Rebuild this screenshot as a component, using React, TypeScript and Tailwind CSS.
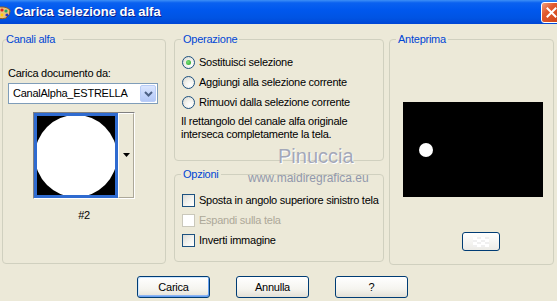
import React from 'react';

const Radio = ({ checked, label }: { checked?: boolean; label: string }) => (
  <div className="h-[20px] flex items-center pl-[7px]">
    <span className="w-[13px] h-[13px] rounded-full border border-[#1c5180] bg-[radial-gradient(circle_at_65%_70%,#ffffff_0%,#f4f3ee_40%,#d6d4cb_100%)] flex items-center justify-center">
      {checked && <span className="w-[5px] h-[5px] rounded-full bg-[radial-gradient(circle_at_40%_40%,#7be07b,#21a121)]" />}
    </span>
    <span className="ml-[4px] whitespace-nowrap">{label}</span>
  </div>
);

const Check = ({ disabled, label }: { disabled?: boolean; label: string }) => (
  <div className="h-[20px] flex items-center pl-[7px]">
    <span
      className={`w-[13px] h-[13px] border ${
        disabled
          ? 'border-[#cac8bb] bg-white'
          : 'border-[#1c5180] bg-[linear-gradient(135deg,#dcdcd7_0%,#f3f3ef_55%,#ffffff_100%)]'
      }`}
    />
    <span className={`ml-[4px] whitespace-nowrap ${disabled ? 'text-[#aca899]' : ''}`}>{label}</span>
  </div>
);

const Button = ({ label, def }: { label: string; def?: boolean }) => (
  <button
    className={`w-[73px] h-[22px] rounded-[3px] border border-[#003c74] bg-[linear-gradient(to_bottom,#ffffff_0%,#f5f4ef_60%,#e3e0d6_100%)] text-black ${
      def ? 'shadow-[inset_1px_1px_0_#cee7ff,inset_-1px_-1px_0_#69a1f0,inset_0_-2px_0_#8cb4f2]' : ''
    }`}
  >
    {label}
  </button>
);

const App: React.FC = () => {
  return (
    <div className="w-[557px] h-[301px] bg-[#ece9d8] overflow-hidden relative text-[11px] leading-[13px] tracking-[-0.25px] text-black font-['Liberation_Sans',Arial,sans-serif]">
      {/* Title bar */}
      <div className="h-[24px] flex items-center justify-between bg-[linear-gradient(to_bottom,#3d8ff6_0%,#0a61f0_12%,#0058ee_40%,#0054e3_75%,#0046d5_100%)]">
        <div className="flex items-center">
          <svg width="11" height="15" viewBox="0 0 11 15" className="mt-[1px]">
            <path d="M-4 3 Q5 0 10 5 Q11 10 6 13 Q-1 15 -4 11 Z" fill="#e9c27a" stroke="#8a5a20" strokeWidth="1" />
            <circle cx="2" cy="5" r="1.6" fill="#d22" />
            <circle cx="6" cy="6" r="1.6" fill="#2a6" />
            <circle cx="7" cy="10" r="1.6" fill="#23c" />
            <circle cx="2" cy="10" r="1.4" fill="#fc0" />
          </svg>
          <span className="ml-[3px] text-white font-bold text-[13px] leading-[16px] tracking-normal [text-shadow:1px_1px_0_#0a1e8c]">
            Carica selezione da alfa
          </span>
        </div>
        <div className="w-[21px] h-[21px] mr-[-5px] rounded-[3px] border border-white bg-[linear-gradient(135deg,#f0a080_0%,#e25a2f_35%,#cc4216_100%)] flex items-center justify-center">
          <svg width="11" height="11" viewBox="0 0 11 11">
            <path d="M1.5 1.5 L9.5 9.5 M9.5 1.5 L1.5 9.5" stroke="white" strokeWidth="2" strokeLinecap="square" />
          </svg>
        </div>
      </div>

      {/* Body */}
      <div className="flex pl-[2px] pt-[9px]">
        {/* Canali alfa */}
        <fieldset className="w-[164px] h-[231px] border border-[#d0d0bf] rounded-[4px] pl-[5px]">
          <legend className="px-[3px] -translate-x-[5px] text-[#0046d5]">Canali alfa</legend>
          <div className="mt-[21px]">Carica documento da:</div>
          <div className="mt-[3px] w-[150px] h-[21px] border border-[#7f9db9] bg-white flex items-center justify-between">
            <span className="pl-[4px]">CanalAlpha_ESTRELLA</span>
            <span className="w-[16px] h-[17px] mr-[1px] rounded-[2px] bg-[linear-gradient(to_bottom,#dbe6fe_0%,#c1d3fb_60%,#b4c8f6_100%)] border border-[#b9cdf7] flex items-center justify-center">
              <svg width="9" height="6" viewBox="0 0 9 6">
                <path d="M1 1 L4.5 4.5 L8 1" stroke="#4d6185" strokeWidth="2" fill="none" />
              </svg>
            </span>
          </div>
          <div className="mt-[8px] ml-[25px] w-[102px] h-[87px] border-t border-l border-[#808080] border-r border-b border-r-white border-b-white flex">
            <div className="w-[84px] h-[85px] border-[3px] border-[#2f6bd0] bg-black">
              <svg width="78" height="79" viewBox="0 0 78 79">
                <rect width="78" height="79" fill="black" />
                <circle cx="39" cy="40" r="41" fill="white" />
              </svg>
            </div>
            <div className="flex-1 border-l border-t border-white border-r border-b border-r-[#aca899] border-b-[#aca899] flex items-center justify-center">
              <svg width="7" height="4" viewBox="0 0 7 4" className="mb-[2px]">
                <path d="M0 0 L7 0 L3.5 4 Z" fill="black" />
              </svg>
            </div>
          </div>
          <div className="ml-[25px] w-[102px] mt-[10px] text-center">#2</div>
        </fieldset>

        {/* Middle column */}
        <div className="ml-[8px] w-[210px] flex flex-col">
          <fieldset className="h-[128px] border border-[#d0d0bf] rounded-[4px]">
            <legend className="ml-[6px] px-[2px] text-[#0046d5]">Operazione</legend>
            <div className="mt-[6px]">
              <Radio checked label="Sostituisci selezione" />
              <Radio label="Aggiungi alla selezione corrente" />
              <Radio label="Rimuovi dalla selezione corrente" />
            </div>
            <div className="mt-[3px] pl-[6px]">
              Il rettangolo del canale alfa originale
              <br />
              interseca completamente la tela.
            </div>
          </fieldset>
          <fieldset className="mt-[7px] h-[94px] border border-[#d0d0bf] rounded-[4px]">
            <legend className="ml-[6px] px-[2px] text-[#0046d5]">Opzioni</legend>
            <div className="mt-[9px]">
              <Check label="Sposta in angolo superiore sinistro tela" />
              <Check disabled label="Espandi sulla tela" />
              <Check label="Inverti immagine" />
            </div>
          </fieldset>
        </div>

        {/* Anteprima */}
        <fieldset className="ml-[5px] w-[165px] h-[232px] border border-[#d0d0bf] rounded-[4px]">
          <legend className="ml-[6px] px-[2px] text-[#0046d5]">Anteprima</legend>
          <div className="mt-[56px] ml-[13px] w-[140px] h-[95px] bg-black relative">
            <span className="absolute left-[16px] top-[41px] w-[14px] h-[14px] rounded-full bg-white" />
          </div>
          <div className="mt-[35px] ml-[72px] w-[38px] h-[19px] rounded-[3px] border border-[#003c74] bg-[linear-gradient(to_bottom,#ffffff,#ecebe6)] flex items-center justify-center">
            <span className="w-[16px] h-[10px] bg-[conic-gradient(#f0f0f0_25%,#ffffff_0_50%,#f0f0f0_0_75%,#ffffff_0)] bg-[length:8px_5px]" />
          </div>
        </fieldset>
      </div>

      {/* Buttons */}
      <div className="mt-[11px] pl-[137px] flex gap-[26px]">
        <Button def label="Carica" />
        <Button label="Annulla" />
        <Button label="?" />
      </div>

      {/* Watermark */}
      <div className="absolute left-[278px] top-[145px] text-[20px] leading-[22px] tracking-normal text-[#a3a8b9] [text-shadow:1px_1px_0_#ffffff] pointer-events-none">
        Pinuccia
      </div>
      <div className="absolute left-[248px] top-[171px] text-[12px] leading-[14px] tracking-normal text-[#9198ac] pointer-events-none">
        www.maidiregrafica.eu
      </div>
    </div>
  );
};

export default App;
